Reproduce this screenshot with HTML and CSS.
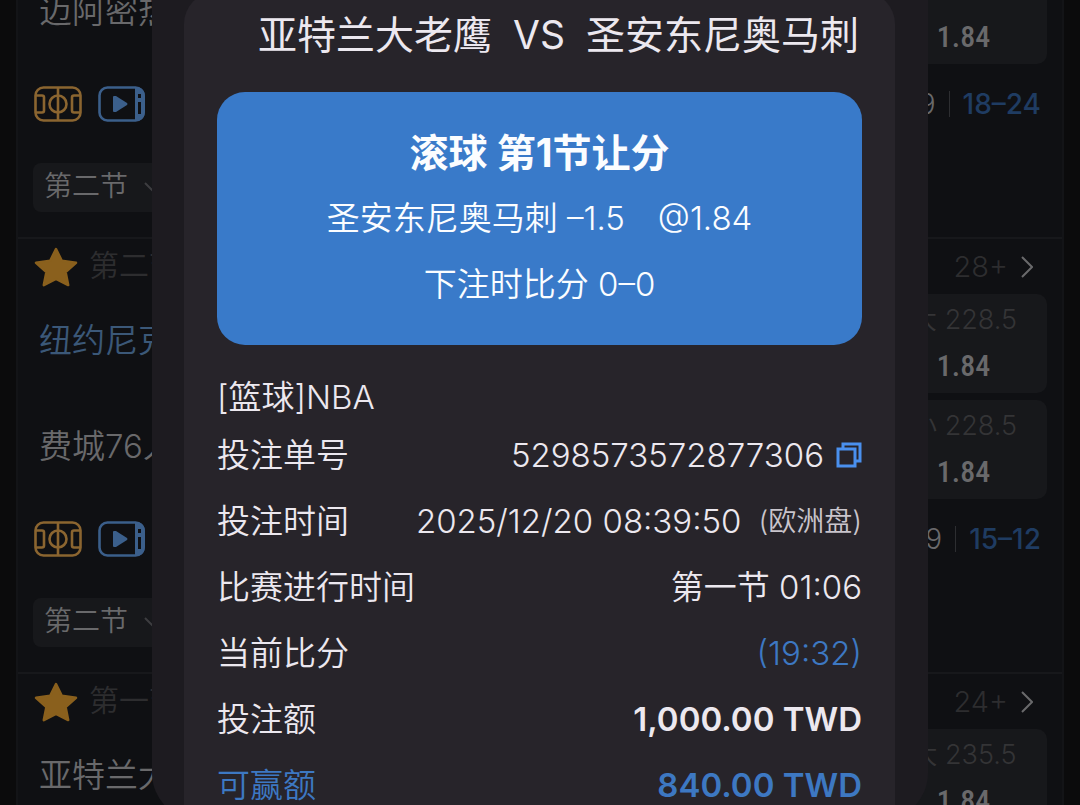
FILE: index.html
```html
<!DOCTYPE html>
<html lang="zh-CN">
<head>
<meta charset="utf-8">
<meta name="viewport" content="width=device-width, initial-scale=1">
<title>投注详情</title>
<link rel="stylesheet" href="styles.css">
</head>
<body>
<svg class="defs" width="0" height="0" aria-hidden="true">
  <symbol id="court" viewBox="0 0 48 36">
    <g fill="none" stroke="currentColor" stroke-width="2.600">
      <rect x="1.500" y="1.500" width="45" height="33" rx="8"/>
      <path d="M24 1v34M1 9.500h7q2 0 2 2v13q0 2-2 2H1M47 9.500h-7q-2 0-2 2v13q0 2 2 2h7"/>
      <circle cx="24" cy="18" r="8.500"/>
    </g>
  </symbol>
  <symbol id="video" viewBox="0 0 48 36">
    <rect x="1.500" y="1.500" width="44" height="33" rx="8" fill="none" stroke="currentColor" stroke-width="2.600"/>
    <path d="M15 11q0-1 1-1h2l11 7q1 1 0 2l-11 7h-2q-1 0-1-1z" fill="currentColor"/>
    <path fill-rule="evenodd" d="M37 1h3q7 2 7 9v16q0 7-7 9h-3zM40 8v4h3V8zM40 16v12h3V16z" fill="currentColor"/>
  </symbol>
  <symbol id="star" viewBox="0 0 44 40">
    <path d="M22 2l5.800 11.800 14.200 2-10.400 9.300 2.600 13L22 31.800 9.800 38.100l2.600-13L2 15.800l14.200-2z" fill="currentColor" stroke="currentColor" stroke-width="2.500" stroke-linejoin="round"/>
  </symbol>
  <symbol id="chevron" viewBox="0 0 12 22">
    <path d="M1 1l10 10L1 21" fill="none" stroke="currentColor" stroke-width="2"/>
  </symbol>
</svg>

<div class="page">
  <main class="board">
    <section class="match match--first">
      <div class="match-body">
        <div class="team">迈阿密热火</div>
        <button class="odds" type="button"><span class="price">1.84</span></button>
      </div>
      <div class="match-media">
        <svg class="icon court"><use href="#court"/></svg>
        <svg class="icon video"><use href="#video"/></svg>
        <div class="score"><span>9</span><span class="bar"></span><span class="total">18–24</span></div>
      </div>
      <label class="period"><select aria-label="节次"><option>第二节</option></select><svg class="arrow"><use href="#chevron"/></svg></label>
    </section>

    <section class="match">
      <header class="match-head">
        <svg class="star"><use href="#star"/></svg><span class="stage">第二节</span>
        <a class="more" href="#">28+<svg class="arrow"><use href="#chevron"/></svg></a>
      </header>
      <div class="match-body">
        <div class="team team--active">纽约尼克斯</div>
        <button class="odds" type="button"><span class="line">大 228.5</span><span class="price">1.84</span></button>
        <div class="team">费城76人</div>
        <button class="odds" type="button"><span class="line">小 228.5</span><span class="price">1.84</span></button>
      </div>
      <div class="match-media">
        <svg class="icon court"><use href="#court"/></svg>
        <svg class="icon video"><use href="#video"/></svg>
        <div class="score"><span>9</span><span class="bar"></span><span class="total">15–12</span></div>
      </div>
      <label class="period"><select aria-label="节次"><option>第二节</option></select><svg class="arrow"><use href="#chevron"/></svg></label>
    </section>

    <section class="match">
      <header class="match-head">
        <svg class="star"><use href="#star"/></svg><span class="stage">第一节</span>
        <a class="more" href="#">24+<svg class="arrow"><use href="#chevron"/></svg></a>
      </header>
      <div class="match-body">
        <div class="team">亚特兰大</div>
        <button class="odds" type="button"><span class="line">大 235.5</span><span class="price">1.84</span></button>
      </div>
    </section>
  </main>

  <div class="dialog" role="dialog" aria-labelledby="dialog-title">
    <div class="sheet">
      <h1 class="title" id="dialog-title"><span>亚特兰大老鹰</span><span>VS</span><span>圣安东尼奥马刺</span></h1>
      <div class="pick">
        <h2 class="pick-title">滚球 第1节让分</h2>
        <p class="pick-line"><span>圣安东尼奥马刺 –1.5</span><span>@1.84</span></p>
        <p class="pick-line">下注时比分 0–0</p>
      </div>
      <p class="league">[篮球]NBA</p>
      <dl class="details">
        <div class="row"><dt>投注单号</dt><dd>5298573572877306
          <button class="copy" type="button" aria-label="复制"><svg viewBox="0 0 26 26"><path d="M7 6V2h17v17h-4M2 7h17v17H2z" fill="none" stroke="currentColor" stroke-width="3"/></svg></button></dd></div>
        <div class="row"><dt>投注时间</dt><dd class="time">2025/12/20 08:39:50 <small>(欧洲盘)</small></dd></div>
        <div class="row"><dt>比赛进行时间</dt><dd>第一节 01:06</dd></div>
        <div class="row"><dt>当前比分</dt><dd class="blue">(19:32)</dd></div>
        <div class="row"><dt>投注额</dt><dd class="amount">1,000.00 TWD</dd></div>
        <div class="row blue"><dt>可赢额</dt><dd class="amount">840.00 TWD</dd></div>
      </dl>
    </div>
  </div>
</div>
</body>
</html>
```
FILE: styles.css
```css
* { box-sizing: border-box; }

body {
  margin: 0;
  background: #0b0b0c;
  color: #ece8ef;
  font-family: Inter, "Noto Sans CJK SC", sans-serif;
  font-weight: 350;
}

h1, h2, p, dl, dd { margin: 0; }
button, select { font: inherit; color: inherit; border: 0; padding: 0; }
.defs { position: absolute; }

.page {
  position: relative;
  height: 100vh;
  overflow: hidden;
  padding: 0 16px;
}

/* Match list */
.board {
  margin-top: -35px;
  background: #0f1013;
  border: solid #131417;
  border-width: 0 2px;
  color: #69696b;
}

.match { padding: 0 15px 25px; border-top: 2px solid #17181b; }
.match--first { border-top: 0; }

.match-head {
  display: flex;
  align-items: center;
  height: 55px;
  padding: 0 12px 0 1px;
  gap: 11px;
  font-size: 30px;
  line-height: 40px;
  color: #2d2d2f;
}
.stage { padding-bottom: 3px; }
.star { width: 44px; height: 40px; color: #8a601d; }
.more {
  display: flex;
  align-items: center;
  gap: 13px;
  margin-left: auto;
  color: #2d2d2f;
  font-size: 29px;
  text-decoration: none;
}
.arrow { width: 12px; height: 22px; color: #69696b; }
.more .arrow { margin-right: 2px; }

.match-body {
  display: grid;
  grid-template-columns: 1fr 167px;
  grid-auto-rows: 99px;
  row-gap: 7px;
}
.team {
  padding-left: 6px;
  font-size: 33px;
  line-height: 92px;
  white-space: nowrap;
}
.team--active { color: #3b5878; }

.odds {
  display: flex;
  flex-direction: column;
  align-items: center;
  justify-content: flex-end;
  padding-bottom: 5px;
  background: #17181b;
  border-radius: 10px;
}
.line { font-size: 27px; line-height: 48px; color: #343436; }
.price {
  font-family: "Roboto Condensed", "Open Sans Condensed", Roboto, sans-serif;
  font-weight: 500;
  font-size: 30px;
  line-height: 44px;
}

.match-media {
  display: flex;
  align-items: center;
  gap: 16px;
  margin-top: 22px;
  padding: 0 6px 0 1px;
}
.icon { width: 48px; height: 36px; }
.court { color: #8b6530; }
.video { color: #3b5f8b; }
.score {
  display: flex;
  align-items: center;
  gap: 13px;
  margin-left: auto;
  font-size: 28px;
  line-height: 36px;
}
.bar { width: 1px; height: 26px; background: #2d2e31; }
.total { color: #1f3c62; font-weight: 500; }

.period {
  display: flex;
  align-items: center;
  width: 140px;
  height: 49px;
  margin-top: 41px;
  padding-left: 11px;
  gap: 20px;
  background: #17181b;
  border-radius: 8px;
  font-size: 28px;
}
.period select {
  height: 49px;
  padding-bottom: 3px;
  appearance: none;
  background: none;
}
.period .arrow { transform: rotate(90deg); color: #3d3d40; }

/* Bet slip */
.dialog {
  position: absolute;
  top: -8px;
  bottom: -16px;
  left: 152px;
  right: 152px;
  display: flex;
  padding: 0 33px 0 32px;
  background: #1d1b20;
  border-radius: 0 0 48px 48px;
}
.sheet {
  flex: 1;
  padding: 0 33px;
  background: #27242a;
  border-radius: 32px 32px 0 0;
}
.title {
  display: flex;
  justify-content: flex-end;
  gap: 21px;
  padding: 18px 3px 32px;
  font-size: 39px;
  line-height: 50px;
  font-weight: 400;
  white-space: nowrap;
}
.pick {
  padding: 29px 0 28px;
  background: #397ac9;
  border-radius: 28px;
  color: #fbfdff;
  text-align: center;
}
.pick-title { font-size: 39px; line-height: 64px; font-weight: 700; }
.pick-line {
  display: flex;
  justify-content: center;
  gap: 33px;
  font-size: 33px;
  line-height: 66px;
}
.league { margin-top: 27px; font-size: 33px; line-height: 50px; }
.row {
  display: flex;
  justify-content: space-between;
  font-size: 33px;
  line-height: 66px;
  white-space: nowrap;
}
.row dd { display: flex; align-items: center; gap: 12px; }
.row .time { gap: 17px; }
.row small { font-size: 28px; color: #c9c5cc; }
.row .amount { font-weight: 600; }
.blue { color: #3d78c2; }
.copy { display: flex; background: none; color: #4a90ee; }
.copy svg { width: 26px; height: 26px; }
```
